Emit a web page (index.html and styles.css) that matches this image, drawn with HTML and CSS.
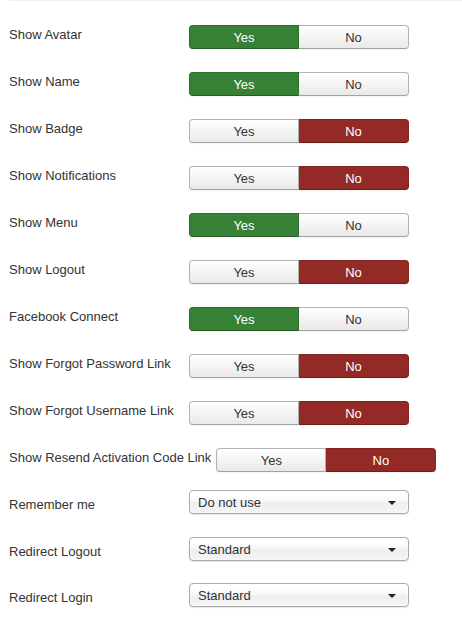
FILE: index.html
```html
<!DOCTYPE html>
<html>
<head>
<meta charset="utf-8">
<link rel="stylesheet" href="styles.css">
</head>
<body>
<div class="rule"></div>
<div class="form">
  <div class="row"><label class="lbl">Show Avatar</label><div class="toggle"><span class="btn yes on">Yes</span><span class="btn no">No</span></div></div>
  <div class="row"><label class="lbl">Show Name</label><div class="toggle"><span class="btn yes on">Yes</span><span class="btn no">No</span></div></div>
  <div class="row"><label class="lbl">Show Badge</label><div class="toggle"><span class="btn yes">Yes</span><span class="btn no on">No</span></div></div>
  <div class="row"><label class="lbl">Show Notifications</label><div class="toggle"><span class="btn yes">Yes</span><span class="btn no on">No</span></div></div>
  <div class="row"><label class="lbl">Show Menu</label><div class="toggle"><span class="btn yes on">Yes</span><span class="btn no">No</span></div></div>
  <div class="row"><label class="lbl">Show Logout</label><div class="toggle"><span class="btn yes">Yes</span><span class="btn no on">No</span></div></div>
  <div class="row"><label class="lbl">Facebook Connect</label><div class="toggle"><span class="btn yes on">Yes</span><span class="btn no">No</span></div></div>
  <div class="row"><label class="lbl">Show Forgot Password Link</label><div class="toggle"><span class="btn yes">Yes</span><span class="btn no on">No</span></div></div>
  <div class="row"><label class="lbl">Show Forgot Username Link</label><div class="toggle"><span class="btn yes">Yes</span><span class="btn no on">No</span></div></div>
  <div class="row tight"><label class="lbl">Show Resend Activation Code Link</label><div class="toggle"><span class="btn yes">Yes</span><span class="btn no on">No</span></div></div>
  <div class="row sel"><label class="lbl">Remember me</label><div class="select"><span class="val">Do not use</span><span class="caret"></span></div></div>
  <div class="row sel snug"><label class="lbl">Redirect Logout</label><div class="select"><span class="val">Standard</span><span class="caret"></span></div></div>
  <div class="row sel"><label class="lbl">Redirect Login</label><div class="select"><span class="val">Standard</span><span class="caret"></span></div></div>
</div>
</body>
</html>
```
FILE: styles.css
```css
html, body {
  margin: 0;
  padding: 0;
  background: #fff;
  font-family: "Liberation Sans", Arial, sans-serif;
  font-size: 13px;
  color: #333;
}
.rule {
  margin-left: 9px;
  border-top: 1px solid #eeeeee;
}
.form {
  padding: 24px 0 0 9px;
}
.row {
  display: flex;
  align-items: flex-start;
  margin-bottom: 23px;
}
.row.tight {
  margin-bottom: 18px;
}
.row.snug {
  margin-bottom: 22px;
}
.lbl {
  min-width: 175px;
  padding-right: 5px;
  padding-top: 1px;
  line-height: 18px;
  color: #333;
  white-space: nowrap;
}
.row.sel .lbl {
  padding-top: 6px;
}
.toggle {
  display: flex;
  width: 220px;
}
.btn {
  box-sizing: border-box;
  width: 110px;
  height: 24px;
  padding-top: 1px;
  line-height: 21px;
  text-align: center;
  color: #333;
  background: linear-gradient(to bottom, #ffffff, #e9e9e9);
  border: 1px solid #b3b3b3;
  border-bottom-color: #a2a2a2;
  box-shadow: 0 1px 2px rgba(0,0,0,0.05);
}
.btn.yes {
  border-radius: 4px 0 0 4px;
}
.btn.no {
  border-radius: 0 4px 4px 0;
  border-left: none;
}
.btn.yes.on {
  background: #378137;
  border-color: #2f702f;
  border-bottom-color: #265c26;
  color: #fff;
}
.btn.no.on {
  background: #942a25;
  border-color: #82241f;
  border-bottom-color: #6e1e1a;
  color: #fff;
}
.select {
  box-sizing: border-box;
  width: 220px;
  height: 24px;
  display: flex;
  align-items: center;
  justify-content: space-between;
  padding: 1px 12px 0 8px;
  border: 1px solid #aaaaaa;
  border-radius: 4px;
  background: linear-gradient(to bottom, #ffffff 20%, #f6f6f6 50%, #eeeeee 52%, #f4f4f4 100%);
  box-shadow: 0 0 3px #fff inset, 0 1px 1px rgba(0,0,0,0.1);
  line-height: 21px;
  color: #333;
}
.caret {
  width: 0;
  height: 0;
  border-left: 4px solid transparent;
  border-right: 4px solid transparent;
  border-top: 4px solid #222;
  margin-top: 1px;
}
```
